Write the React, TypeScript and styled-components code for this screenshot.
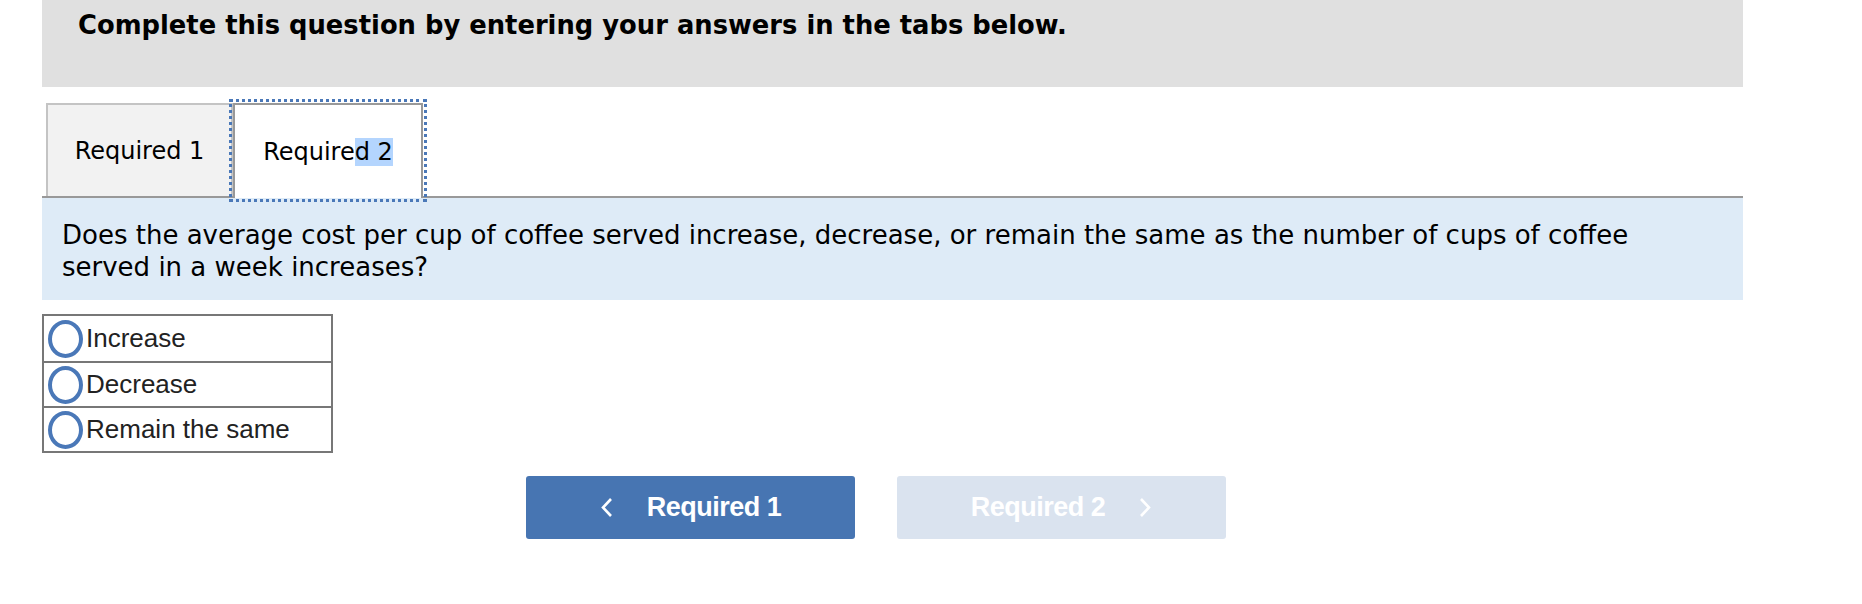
import React from "react";
import styled, { createGlobalStyle } from "styled-components";

const GlobalStyle = createGlobalStyle`
  html, body {
    margin: 0;
    padding: 0;
    background: #fff;
  }
`;

const Page = styled.div`
  width: 1701px;
  margin-left: 42px;
  font-family: "DejaVu Sans", Verdana, sans-serif;
  color: #000;
`;

const Header = styled.div`
  height: 87px;
  background: #e0e0e0;
  padding: 10px 0 0 36px;
  box-sizing: border-box;
  font-size: 25.8px;
  font-weight: bold;
`;

const TabRow = styled.div`
  display: flex;
  margin-top: 16px;
  padding-left: 4px;
  border-bottom: 2px solid #999;
`;

const Tab = styled.div<{ $active?: boolean }>`
  box-sizing: border-box;
  width: ${(p) => (p.$active ? "190px" : "187px")};
  height: ${(p) => (p.$active ? "95px" : "93px")};
  display: flex;
  align-items: center;
  justify-content: center;
  font-size: 24px;
  background: ${(p) => (p.$active ? "#fff" : "#f2f2f2")};
  border: 2px solid ${(p) => (p.$active ? "#999" : "#c4c4c4")};
  border-bottom: none;
  margin-bottom: ${(p) => (p.$active ? "-2px" : "0")};
  outline: ${(p) => (p.$active ? "3px dotted #4a78b8" : "none")};
  outline-offset: ${(p) => (p.$active ? "1px" : "0")};
  position: relative;
  z-index: ${(p) => (p.$active ? 1 : 0)};
`;

const Selected = styled.span`
  background: #b4d5fe;
`;

const Question = styled.div`
  background: #deebf7;
  padding: 21px 60px 17px 20px;
  font-size: 26px;
  line-height: 32px;
`;

const Options = styled.div`
  margin-top: 14px;
  width: 291px;
  border: 2px solid #777;
  box-sizing: border-box;
`;

const Option = styled.label`
  display: flex;
  align-items: center;
  height: 45px;
  box-sizing: border-box;
  padding-left: 4px;
  font-family: "Liberation Sans", Arial, sans-serif;
  font-size: 26px;
  color: #222;
  & + & {
    border-top: 2px solid #777;
  }
`;

const Radio = styled.span`
  width: 27px;
  height: 30px;
  border: 4px solid #4a78b8;
  border-radius: 50%;
  margin-right: 3px;
  flex-shrink: 0;
`;

const ButtonRow = styled.div`
  display: flex;
  gap: 42px;
  margin-top: 23px;
  padding-left: 484px;
`;

const NavButton = styled.button<{ $disabled?: boolean }>`
  width: 329px;
  height: 63px;
  border: none;
  border-radius: 3px;
  background: ${(p) => (p.$disabled ? "#dae3ef" : "#4775b2")};
  color: #fff;
  font-family: "Liberation Sans", Arial, sans-serif;
  font-weight: bold;
  font-size: 27px;
  letter-spacing: -0.5px;
  display: flex;
  align-items: center;
  justify-content: center;
  gap: 34px;
  cursor: ${(p) => (p.$disabled ? "default" : "pointer")};
`;

const Chevron = ({ dir }: { dir: "left" | "right" }) => (
  <svg width="13" height="21" viewBox="0 0 13 21" fill="none">
    <path
      d={dir === "left" ? "M11 2 L3 10.5 L11 19" : "M2 2 L10 10.5 L2 19"}
      stroke="#fff"
      strokeWidth="2.6"
    />
  </svg>
);

export default function App() {
  return (
    <>
      <GlobalStyle />
      <Page>
        <Header>Complete this question by entering your answers in the tabs below.</Header>
        <TabRow>
          <Tab>Required 1</Tab>
          <Tab $active>
            <span>
              Require<Selected>d 2</Selected>
            </span>
          </Tab>
        </TabRow>
        <Question>
          Does the average cost per cup of coffee served increase, decrease, or remain the same as the number of cups of coffee
          served in a week increases?
        </Question>
        <Options>
          {["Increase", "Decrease", "Remain the same"].map((o) => (
            <Option key={o}>
              <Radio />
              {o}
            </Option>
          ))}
        </Options>
        <ButtonRow>
          <NavButton>
            <Chevron dir="left" />
            Required 1
          </NavButton>
          <NavButton $disabled>
            Required 2
            <Chevron dir="right" />
          </NavButton>
        </ButtonRow>
      </Page>
    </>
  );
}
